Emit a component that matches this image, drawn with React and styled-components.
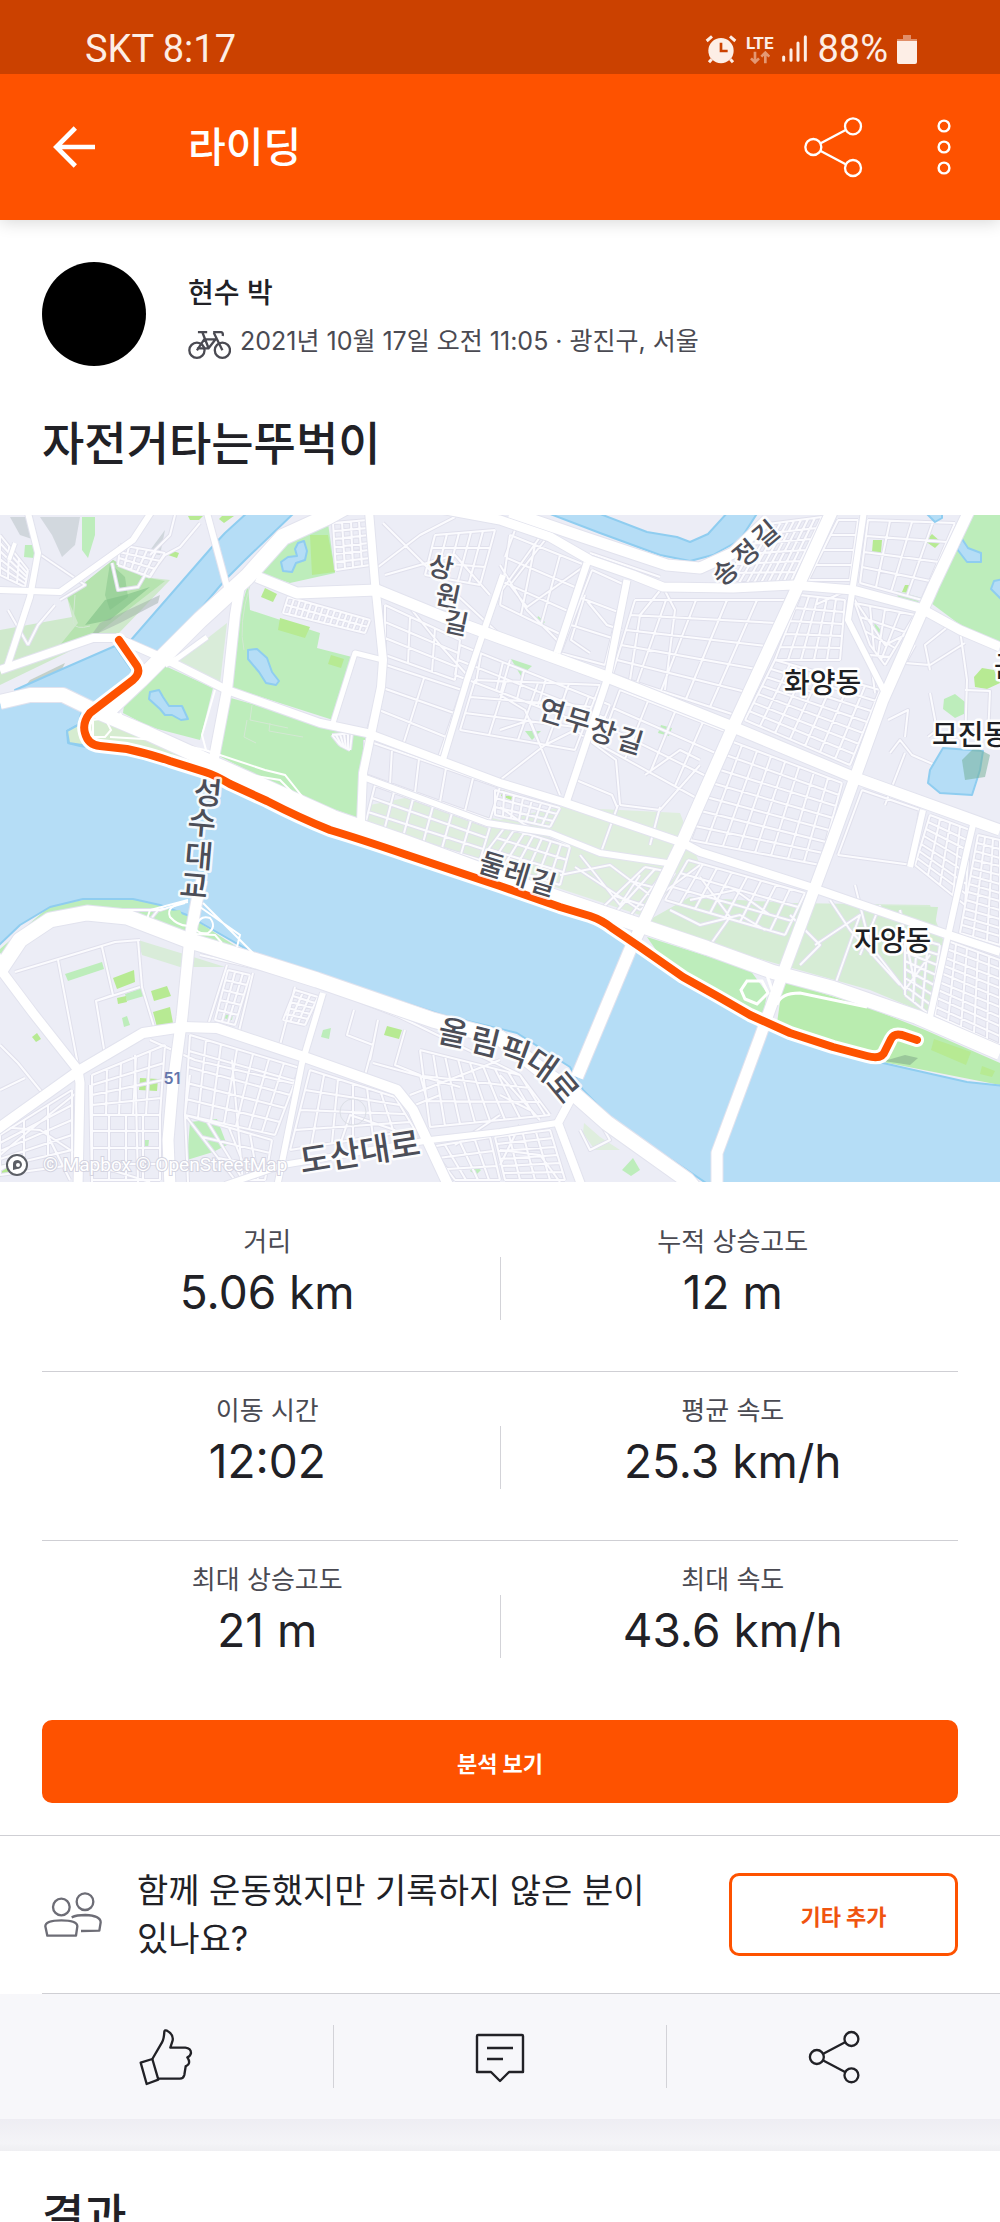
import styled, { createGlobalStyle } from 'styled-components';

const GlobalStyle = createGlobalStyle`
  * {
    box-sizing: border-box;
  }

  body {
    margin: 0;
    background: #ffffff;
    color: #212126;
    font-family: Inter, 'Noto Sans CJK KR', sans-serif;
  }

  button {
    font-family: inherit;
    cursor: pointer;
  }
`;

// Screen: fixed header on top, scrolling content below
const Screen = styled.div`
  display: flex;
  flex-direction: column;
  height: 100vh;
`;

const Header = styled.header`
  z-index: 1;
  background: #fe5200;
  color: #ffffff;
  box-shadow: 0 2px 16px rgba(0, 0, 0, 0.16);
`;

const StatusBar = styled.div`
  display: flex;
  align-items: center;
  justify-content: space-between;
  height: 74px;
  padding: 24px 83px 0 85px;
  background: #cb4100;
  color: #fdeee6;
  font-family: Roboto, sans-serif;
  font-size: 38px;
  line-height: 44px;
`;

const StatusIcons = styled.div`
  display: flex;
  align-items: center;
  gap: 9px;
`;

const Network = styled.div`
  display: flex;
  flex-direction: column;
  align-items: center;
  font-size: 17px;
  font-weight: 700;
  line-height: 16px;
`;

const AppBar = styled.div`
  display: flex;
  align-items: center;
  height: 146px;
  padding: 0 32px 0 42px;
`;

const IconButton = styled.button`
  display: flex;
  align-items: center;
  justify-content: center;
  width: ${props => props.$width || 64}px;
  height: 64px;
  padding: 0;
  border: 0;
  background: none;
  color: inherit;
`;

const ScreenTitle = styled.h1`
  flex: 1;
  margin: 0 0 0 82px;
  font-size: 41px;
  font-weight: 500;
  line-height: 60px;
`;

const BarActions = styled.div`
  display: flex;
  gap: 55px;
`;

const Content = styled.main`
  flex: 1;
  min-height: 0;
  overflow-y: auto;
  scrollbar-width: none;
`;

const Summary = styled.section`
  padding: 42px 42px 40px;
`;

const Athlete = styled.div`
  display: flex;
  gap: 42px;
`;

const Avatar = styled.div`
  width: 104px;
  height: 104px;
  border-radius: 50%;
  background: #000000;
`;

const AthleteText = styled.div`
  display: flex;
  flex-direction: column;
  gap: 8px;
  padding-top: 11px;
`;

const AthleteName = styled.div`
  font-size: 28px;
  font-weight: 500;
  line-height: 40px;
`;

const Meta = styled.div`
  display: flex;
  align-items: flex-end;
  gap: 9px;
  color: #4a4a52;
  font-size: 25px;
  line-height: 40px;
`;

const Heading = styled.h2`
  margin: ${props => props.$top || 0}px 0 0;
  font-size: 46px;
  font-weight: 500;
  line-height: 64px;
`;

const MapFrame = styled.svg`
  display: block;
  width: 100%;
  height: auto;
  font-family: 'Noto Sans CJK KR', sans-serif;
`;

const Stats = styled.section`
  padding: 21px 42px 32px;
`;

const StatRow = styled.div`
  display: grid;
  grid-template-columns: 1fr 1px 1fr;
  gap: 7px;
  padding: 21px 0 51px;
  border-bottom: ${props => (props.$last ? '0' : '1px solid #cfcfd4')};
`;

const Stat = styled.div`
  display: flex;
  flex-direction: column;
  align-items: center;
  gap: 4px;
`;

const StatLabel = styled.div`
  color: #4a4a52;
  font-size: 26px;
  line-height: 36px;
`;

const StatValue = styled.div`
  font-size: 46px;
  line-height: 56px;
`;

const Separator = styled.div`
  width: 1px;
  height: 63px;
  align-self: ${props => props.$align || 'end'};
  background: #d3d3d8;
`;

const Button = styled.button`
  width: ${props => props.$width || '100%'};
  height: 83px;
  border: 3px solid #fe5200;
  border-radius: 10px;
  background: ${props => (props.$outline ? '#ffffff' : '#fe5200')};
  color: ${props => (props.$outline ? '#f0540f' : '#ffffff')};
  font-size: 22px;
  font-weight: 700;
`;

const AnalysisButton = styled(Button)`
  display: block;
  margin-top: 11px;
`;

const Prompt = styled.section`
  display: flex;
  align-items: center;
  height: 158px;
  padding: 0 42px;
  border-top: 1px solid #cfcfd4;
`;

const PromptText = styled.p`
  flex: 1;
  margin: 0 20px 0 35px;
  font-size: 34px;
  line-height: 48px;
  word-break: keep-all;
`;

const Divider = styled.div`
  height: 1px;
  margin-left: 42px;
  background: #cfcfd4;
`;

const Actions = styled.div`
  display: grid;
  grid-template-columns: 1fr 1px 1fr 1px 1fr;
  align-items: center;
  justify-items: center;
  height: 125px;
  background: #f7f7fa;
`;

const SectionGap = styled.div`
  height: 32px;
  background: linear-gradient(#eeedf3, #f4f4f7 75%, #efeff2);
`;

const Results = styled.section`
  padding: 32px 42px 40px;
`;

const land = '#ecedf6';
const water = '#b5ddf6';
const shore = '#8fcdf0';
const green = '#bdedbb';
const lime = '#b7ea93';

// Major roads: [width, points]
const roads = [
  [14, '0,187 30,180 63,180 100,198 147,218 213,248 273,275 333,302 400,325 550,380 633,408 707,433 773,457 833,473 917,502 1000,538'],
  [15, '0,455 20,425 50,405 87,398 127,402 187,425 260,447 317,465 433,505 500,523 550,562 573,578 607,608 687,665 700,680'],
  [16, '345,-8 327,2 283,22 247,62 200,105 140,165 105,198'],
  [11, '510,-3 583,22 667,50 700,53 733,38 767,5'],
  [9, '440,-6 500,5 550,22 590,45 633,60 663,72 733,73 793,70 853,75 920,93 960,115 1000,132'],
  [11, '257,62 297,78 377,75 443,102 500,123 607,162 733,212 853,262 1000,315'],
  [8, '0,155 93,123 117,123 167,145 227,175 320,208 367,218 500,268 563,287 683,328 700,337 810,372 943,418 1000,437'],
  [6, '363,262 487,308 550,318 600,338 667,348'],
  [8, '369,-4 375,68 383,145 381,172 363,258 361,307'],
  [6, '503,60 467,165 442,248'],
  [7, '587,48 557,138'],
  [7, '627,65 607,165 567,285'],
  [12, '832,-4 793,82 733,212 680,332 630,435 577,562'],
  [6, '864,-4 848,105 885,178'],
  [11, '969,-4 933,72 883,185 830,332 783,458 760,522 717,638 717,672'],
  [6, '923,295 910,352'],
  [6, '973,310 967,335 930,502'],
  [6, '207,-2 227,72'],
  [10, '240,70 235,100 227,175 213,248'],
  [6, '28,-2 38,38 30,82 7,152'],
  [6, '-2,75 60,77 133,25 152,-4'],
  [5, '333,208 355,138 383,145'],
  [11, '202,365 197,385 190,422 182,502 173,568 168,625 170,672'],
  [9, '-4,440 3,458 33,498 78,555 80,568 78,672'],
  [10, '-4,615 80,555 143,518 183,512 217,513 307,543 397,575 413,595 449,672'],
  [6, '323,478 302,548 277,672'],
  [6, '225,670 283,650 430,625 500,617 557,608'],
  [8, '572,582 558,608 582,672'],
  [4, '15,28 9,45'],
  [5, '207,122 178,143 165,150'],
];

// Side streets drawn one by one
const lanes = [
  '383,8 430,55 500,120', '378,52 420,20 455,2', '400,80 440,130 467,160', '385,60 455,40 490,80',
  '515,15 505,42', '502,75 540,22', '500,50 527,95 560,128', '545,25 510,70 527,92 586,50', '585,80 571,125 590,138',
  '587,86 607,110 622,115', '663,72 640,100 630,165', '663,72 675,95 665,175', '590,38 660,62', '815,90 848,75 885,130 905,120',
  '875,178 870,140 890,142', '905,148 930,150 965,128', '960,115 967,165 965,230', '965,175 990,176 988,222',
  '890,238 900,225 912,240 935,250', '905,238 885,290', '888,205 908,195 905,222', '930,178 937,215 928,222',
  '930,155 925,130 950,110', '915,130 905,148', '500,215 530,205 560,280', '500,265 545,230 575,215 616,245 620,290',
  '576,265 612,280 617,292', '500,180 525,195 540,230', '510,145 500,180', '500,292 525,310 570,330', '620,290 660,295 700,250',
  '618,290 600,340', '645,260 680,235 700,245', '660,292 650,330', '580,340 620,390 640,360', '575,352 640,395', '640,395 700,350',
  '560,360 610,350 650,380', '670,395 700,410 740,400 765,415', '700,362 730,402 710,430', '690,385 735,375 770,400', '790,400 820,430 800,450',
  '830,385 850,415 900,470', '815,430 860,400 835,470', '855,370 870,430 905,475 930,440', '880,390 860,440', '900,395 915,470',
  '55,90 38,110 28,130', '8,95 28,130', '38,38 85,70 60,85', '150,40 170,20 175,0', '150,60 165,40 180,32 200,8', '112,48 118,75 138,72 145,60',
  '15,457 115,427 140,425', '58,445 78,550', '102,432 113,480', '138,425 142,472 155,515', '113,480 96,486 105,540', '96,486 140,472',
  '0,530 18,548 40,575 50,583', '0,575 25,563', '227,450 208,510', '253,458 238,520', '295,472 280,530', '354,495 347,520 373,530 365,560',
  '378,505 370,545', '405,515 395,550 420,560 427,585', '373,548 460,572', '200,440 300,463 400,502 520,560', '410,580 500,545',
  '0,612 40,615 78,640', '0,640 30,615 80,575', '45,615 70,665', '95,650 150,667', '0,655 25,640', '90,570 92,667', '135,540 138,667',
  '150,525 195,545 300,570', '190,560 185,600 188,667', '232,545 243,667', '340,630 350,600 395,615', '415,590 440,580', '455,630 500,600',
  '520,560 545,600', '500,560 540,605', '500,580 530,595', '500,635 540,640 560,667', '520,610 500,650', '590,590 610,625 590,635 580,615',
  '160,395 175,385 190,385', '150,405 158,395', '200,385 255,440', '202,388 240,430', '120,395 160,395 187,385',
];

// Blocks with a regular street grid: corners clockwise, columns, rows
const grids = [
  [[[288, 82], [370, 105], [365, 118], [283, 98]], 14, 2],
  [[[333, 8], [368, 5], [370, 50], [336, 55]], 4, 6],
  [[[385, 90], [460, 125], [455, 165], [385, 140]], 3, 3],
  [[[386, 150], [462, 175], [438, 245], [368, 215]], 2, 3],
  [[[365, 225], [500, 272], [490, 305], [365, 260]], 5, 1],
  [[[435, 20], [495, 15], [480, 70], [425, 60]], 5, 3],
  [[[475, 165], [600, 170], [575, 235], [460, 215]], 4, 3],
  [[[460, 130], [610, 190], [600, 215], [455, 160]], 7, 2],
  [[[510, 20], [585, 50], [562, 120], [500, 90]], 3, 3],
  [[[592, 55], [625, 70], [605, 150], [560, 138]], 1, 3],
  [[[635, 85], [788, 85], [735, 200], [612, 160]], 5, 5],
  [[[620, 175], [730, 218], [700, 285], [600, 230]], 4, 3],
  [[[760, 10], [822, 2], [790, 68], [725, 68]], 9, 6],
  [[[800, 80], [845, 85], [840, 145], [775, 145]], 5, 5],
  [[[775, 145], [880, 175], [850, 250], [745, 205]], 7, 7],
  [[[838, 5], [858, 5], [850, 65], [808, 65]], 1, 4],
  [[[868, 5], [955, 8], [922, 85], [860, 68]], 4, 4],
  [[[855, 88], [915, 100], [885, 150], [870, 130]], 4, 3],
  [[[728, 225], [842, 268], [820, 350], [690, 325]], 8, 7],
  [[[862, 275], [920, 295], [912, 350], [838, 340]], 1, 1],
  [[[930, 300], [970, 315], [965, 390], [915, 350]], 4, 7],
  [[[978, 320], [1000, 325], [1000, 430], [960, 418]], 3, 12],
  [[[945, 425], [1000, 445], [1000, 530], [935, 500]], 5, 9],
  [[[905, 420], [940, 430], [930, 500], [905, 480]], 3, 7],
  [[[688, 345], [805, 378], [785, 420], [665, 385]], 8, 3],
  [[[495, 275], [560, 293], [550, 312], [495, 300]], 7, 3],
  [[[375, 270], [490, 312], [480, 345], [365, 310]], 6, 3],
  [[[505, 312], [570, 332], [560, 370], [480, 345]], 7, 3],
  [[[645, 352], [675, 358], [640, 410], [600, 395]], 3, 3],
  [[[190, 520], [300, 553], [275, 620], [185, 600]], 7, 5],
  [[[185, 600], [272, 625], [265, 665], [235, 665]], 4, 3],
  [[[310, 555], [395, 582], [415, 615], [290, 635]], 6, 4],
  [[[420, 535], [520, 560], [550, 600], [430, 612]], 8, 3],
  [[[295, 475], [318, 482], [305, 510], [283, 505]], 3, 5],
  [[[228, 455], [250, 460], [235, 510], [215, 505]], 3, 5],
  [[[92, 560], [165, 530], [160, 600], [92, 600]], 5, 4],
  [[[92, 600], [160, 600], [160, 665], [92, 665]], 4, 4],
  [[[430, 632], [490, 622], [500, 665], [455, 665]], 4, 3],
  [[[495, 622], [550, 615], [565, 665], [505, 665]], 4, 6],
  [[[0, 620], [72, 575], [72, 650], [0, 660]], 3, 5],
  [[[120, 30], [165, 38], [150, 62], [118, 50]], 5, 3],
  [[[0, 20], [28, 55], [25, 72], [0, 60]], 3, 5],
  [[[332, 220], [352, 218], [350, 235], [340, 230]], 5, 1],
];

const parks = [
  ['163,150 213,173 200,225 150,212 123,198 125,182', green],
  ['248,70 240,95 230,172 333,205 352,142 317,133 320,118 250,95', green],
  ['227,182 370,222 358,303 300,282 217,240', green],
  ['328,8 335,58 290,68 258,58 287,25', green],
  ['310,20 328,20 335,57 312,60', lime],
  ['280,103 310,112 305,123 278,115', lime],
  ['265,73 277,79 273,87 261,82', lime],
  ['331,140 344,144 341,153 328,149', lime],
  ['227,108 177,147 220,168', '#d9ecd9'],
  ['113,45 67,82 72,102 0,115 0,170 93,125 117,120 170,65 143,62', '#cfe9cc'],
  ['113,45 67,82 78,108 60,130 93,122 165,66 143,62', '#b6e3af'],
  ['82,2 95,2 95,20 88,43 82,35', green],
  ['25,30 35,30 34,43 24,42', green],
  ['170,35 179,38 177,43 168,40', lime],
  ['188,1 203,1 199,5 190,5', lime],
  ['222,1 234,1 224,8 219,4', lime],
  ['967,0 1000,0 1000,128 967,115 927,85', green],
  ['897,76 922,83 915,90 898,85', green],
  ['905,70 911,70 909,78 902,77', lime],
  ['873,25 882,25 881,38 872,37', lime],
  ['932,19 941,27 935,33 925,26', lime],
  ['974,162 982,153 994,155 1000,168 987,174 975,172', lime],
  ['944,184 955,179 965,187 966,198 955,203 943,194', green],
  ['511,144 532,151 521,161', green],
  ['661,210 672,213 669,221 658,218', green],
  ['525,216 541,216 532,225', green],
  ['503,275 515,280 511,285 501,281', lime],
  ['538,101 545,107 541,111 536,106', green],
  ['874,107 883,118 876,120', green],
  ['370,290 410,282 500,305 560,292 680,298 700,350 640,400 361,308', '#dfeede'],
  ['690,382 790,388 930,390 945,430 930,500 870,475 640,410', '#d6ecd5'],
  ['850,390 938,392 935,410 850,385', '#d0ecce'],
  ['647,422 750,455 767,478 763,502 707,475 665,448', green],
  ['783,466 867,492 925,515 1000,548 1000,570 883,547 777,508', '#b9ecaf'],
  ['934,524 971,537 966,550 931,535', lime],
  ['982,551 995,556 992,562 980,559', lime],
  ['0,434 50,391 83,385 137,385 180,395 240,434 187,424 127,400 60,400 0,448', green],
  ['138,425 187,440 225,452 180,452 142,440', '#d9ecd9'],
  ['65,459 102,447 104,454 68,466', green],
  ['113,463 134,455 135,467 117,474', lime],
  ['125,479 142,473 144,481 127,486', green],
  ['117,483 126,481 127,487 118,489', lime],
  ['151,476 167,471 171,481 154,486', lime],
  ['153,497 170,492 173,508 157,512', lime],
  ['122,503 127,501 130,510 124,512', green],
  ['32,522 37,518 41,524 36,527', lime],
  ['224,498 233,498 232,505 223,503', green],
  ['323,515 331,513 329,524 321,522', green],
  ['387,511 402,515 399,524 384,520', lime],
  ['140,563 158,564 157,576 139,575', lime],
  ['190,607 217,604 227,630 213,637 187,645', green],
  ['142,625 149,625 148,634 141,633', green],
  ['0,650 10,648 8,658 0,662', lime],
  ['633,643 640,655 631,661 622,655', green],
  ['474,651 481,655 476,660 470,656', green],
  ['584,608 600,622 620,635 595,635 583,618', '#dfeede'],
];

const hillShades = [
  ['85,110 105,85 125,80 150,72 110,105', '#7fbf86', 0.6],
  ['110,48 125,62 128,82 110,95 105,80', '#7fbf86', 0.45],
  ['100,108 160,80 158,88 120,108 90,122', '#9aa8a4', 0.45],
  ['10,2 28,2 35,25 20,20', '#b3bfc2', 0.5],
  ['40,2 80,2 75,30 62,42 52,20', '#b3bfc2', 0.45],
  ['148,38 165,15 160,40', '#b3bfc2', 0.5],
  ['30,165 65,148 60,158 20,178', '#9db39c', 0.5],
];

const route =
  'M119 125L137 151Q141 158 133 165L90 198Q82 208 85 218Q88 230 100 231L127 234Q150 239 170 246L205 257Q215 260 230 269L267 286Q300 303 330 315Q360 324 407 340L500 371L560 392L590 401Q602 405 612 413L640 432L683 462L717 481L750 500L790 518L833 532L867 541Q882 545 885 536L891 524Q894 518 902 520L917 525';

// Labels that follow a street: [text, x, y, angle, size]
const streetLabels = [
  ['상', 441, 52, 12, 27],
  ['원', 448, 81, 12, 27],
  ['길', 456, 108, 12, 27],
  ['성', 208, 278, 5, 31],
  ['수', 202, 308, 5, 31],
  ['대', 199, 341, 5, 31],
  ['교', 194, 371, 5, 31],
  ['송', 725, 57, -40, 27],
  ['정', 746, 38, -40, 27],
  ['길', 766, 19, -40, 27],
  ['연', 552, 197, 17, 28],
  ['무', 578, 206, 17, 28],
  ['장', 603, 217, 17, 28],
  ['길', 630, 226, 17, 28],
  ['둘', 492, 350, 17, 28],
  ['레', 517, 359, 17, 28],
  ['길', 543, 368, 17, 28],
  ['올', 453, 518, 12, 32],
  ['림', 485, 527, 14, 32],
  ['픽', 515, 537, 20, 32],
  ['대', 542, 550, 35, 32],
  ['로', 563, 572, 50, 32],
  ['도산대로', 360, 637, -9, 33],
];

const placeLabels = [
  ['화양동', 784, 168],
  ['모진동', 932, 220],
  ['자양동', 854, 426],
  ['군자동', 994, 152],
];

const stats = [
  [['거리', '5.06 km'], ['누적 상승고도', '12 m']],
  [['이동 시간', '12:02'], ['평균 속도', '25.3 km/h']],
  [['최대 상승고도', '21 m'], ['최대 속도', '43.6 km/h']],
];

const mix = (p, q, t) => [
  Math.round(p[0] + (q[0] - p[0]) * t),
  Math.round(p[1] + (q[1] - p[1]) * t),
];

function gridPath([corners, cols, rows]) {
  const [a, b, c, d] = corners;
  let path = '';
  for (let i = 0; i <= cols; i++) {
    path += `M${mix(a, b, i / cols)}L${mix(d, c, i / cols)}`;
  }
  for (let i = 0; i <= rows; i++) {
    path += `M${mix(a, d, i / rows)}L${mix(b, c, i / rows)}`;
  }
  return path;
}

function RouteMap() {
  const streets = grids.map(gridPath).join('') + lanes.map(points => `M${points}`).join('');

  return (
    <MapFrame viewBox="0 0 1000 667" role="img" aria-label="라이딩 경로 지도">
      <rect width="1000" height="667" fill={land} />
      {parks.map(([points, fill]) => (
        <polygon key={points} points={points} fill={fill} />
      ))}
      {hillShades.map(([points, fill, opacity]) => (
        <polygon key={points} points={points} fill={fill} opacity={opacity} />
      ))}

      <g fill="none" strokeLinejoin="round">
        <path d={streets} stroke="#e0e0ec" strokeWidth="4" />
        <path d={streets} stroke="#fbfbfe" strokeWidth="2" />
      </g>
      <g fill="none" stroke="#d3e8d3" strokeWidth="1">
        <path d="M250 70Q238 110 244 135M252 190L250 205L288 213M247 205L244 222L256 228M270 208L269 216L303 222M75 80L73 108Q76 115 90 111" />
      </g>

      {/* Han river and the streams that join it */}
      <g fill={water} stroke={shore} strokeWidth="2" strokeLinejoin="round">
        <path d="M-5 190L30 184L60 184L82 195L78 210L67 216L68 228L80 231L100 234L157 246L210 263L267 290L333 316L407 340L500 374L600 410L683 466L750 504L833 536L883 548L927 558L967 567L1005 571V672H712L613 605L583 575L570 552L517 518L443 500L320 460L260 442L187 400L160 390L133 384L83 384L50 392L20 410L-5 434Z" />
        <path d="M248 -3L225 18L212 32L131 125L160 142L225 65L245 45L295 -3Z" />
        <path d="M115 131L60 155L15 175L45 176L95 188L135 160Z" />
        <path d="M545 -3L600 18L660 40L690 46L713 40L740 25L758 -3H728L708 19L690 27L677 22L647 17L595 -3Z" />
        <path d="M943 233L983 236L980 255L972 280L940 278L928 268L930 255Z" />
        <path d="M304 26L307 36L305 45L296 48L292 57L283 56L281 47L288 42L297 41L295 34L298 28Z" />
        <path d="M248 135L257 134L267 143L272 157L279 166L276 170L266 168L259 157L248 144Z" />
        <path d="M150 177L159 175L163 182L169 191L182 191L188 204L181 205L172 200L165 200L160 194L149 184Z" />
        <path d="M962 24L968 33L981 38L981 47L967 47L957 34Z" />
        <path d="M925 -3L935 7L942 3L942 -3Z" />
        <path d="M1003 64L994 66L991 74L1003 86Z" />
      </g>
      <polygon points="78,210 67,216 69,228 82,230 95,230 110,222 95,208" fill="#d6ecd0" stroke={shore} strokeWidth="2" />
      <polygon points="86,228 84,208 92,202 150,225 205,250 200,254" fill="#d6ecd0" />
      <polygon points="160,397 180,395 184,405 210,425 240,434 187,424 150,410" fill={green} />
      <polygon points="962,245 975,232 990,240 985,262 965,265" fill="#6fae92" opacity="0.5" />
      <polygon points="884,546 905,540 918,543 910,550" fill="#9ac79a" />

      <g fill="none" strokeLinejoin="round">
        {roads.map(([width, points]) => (
          <polyline key={points} points={points} stroke="#e2e3ee" strokeWidth={width + 2} />
        ))}
        {roads.map(([width, points]) => (
          <polyline key={points} points={points} stroke="#ffffff" strokeWidth={width} />
        ))}
      </g>

      {/* Interchange ramps */}
      <g fill="none" stroke="#ffffff" strokeWidth="2">
        <path d="M203 388L255 440M200 392L240 420L237 432M188 385L150 395L147 404M188 387Q165 390 170 402Q180 413 192 410" />
        <path d="M120 395L160 395L185 388M197 410Q200 400 210 403Q217 412 208 418Q195 420 194 408M195 419L215 420L222 428" />
        <path d="M93 205L105 203L111 215L105 222L93 222ZM110 222L160 225L205 235L265 255L285 260L305 285M120 198L128 212L205 245L250 260L280 265L298 283" />
        <path d="M215 175L202 220L206 235M123 182L160 140" />
        <path d="M747 466L762 466L768 478L757 489L745 484L741 475Z" strokeWidth="3" />
        <path d="M767 460L773 478L770 500M777 490Q780 478 800 478L867 492" strokeWidth="3" />
      </g>
      <circle cx="353" cy="597" r="13" fill="none" stroke="#dcdfe6" />

      <g fill="none" strokeLinecap="round" strokeLinejoin="round">
        <path d={route} stroke="#ffffff" strokeWidth="14" />
        <path d={route} stroke="#fe5200" strokeWidth="8" />
      </g>

      <g
        stroke="#ffffff"
        strokeWidth="5"
        strokeLinejoin="round"
        paintOrder="stroke"
        textAnchor="middle"
        fill="#4c4e58"
        fontWeight="500"
      >
        {streetLabels.map(([text, x, y, angle, size]) => (
          <text
            key={`${text}${x}`}
            x={x}
            y={y}
            dy="0.36em"
            fontSize={size}
            strokeOpacity="0.85"
            transform={`rotate(${angle} ${x} ${y})`}
          >
            {text}
          </text>
        ))}
      </g>
      <g stroke="#ffffff" strokeWidth="5" strokeLinejoin="round" paintOrder="stroke" fill="#1e1f24" fontSize="28" fontWeight="500">
        {placeLabels.map(([text, x, y]) => (
          <text key={text} x={x} y={y} dy="0.36em">
            {text}
          </text>
        ))}
      </g>
      <text x="172" y="569" textAnchor="middle" fontFamily="Inter, sans-serif" fontSize="16" fontWeight="600" fill="#6375ab">
        51
      </text>

      <circle cx="17" cy="650" r="10" fill="#ffffff" stroke="#5c5f66" strokeWidth="2" />
      <path d="M13 655V649Q13 645 18 645Q22 646 22 650Q21 654 17 654Z" fill="#5c5f66" />
      <circle cx="18" cy="650" r="2" fill="#ffffff" />
      <text x="43" y="656" fontFamily="Roboto, sans-serif" fontSize="19" fill="#ffffff" stroke="#d3d3e0" strokeWidth="2" paintOrder="stroke">
        © Mapbox © OpenStreetMap
      </text>
    </MapFrame>
  );
}

function AlarmIcon() {
  return (
    <svg width="32" height="30" viewBox="608 96 96 90" fill="none" stroke="currentColor">
      <circle cx="656" cy="146" r="38" fill="currentColor" stroke="none" />
      <path d="M613 117L629 103M699 117L683 103M628 172L620 181M684 172L692 181" strokeWidth="9" />
      <path d="M656 122V147H676" stroke="#cb4100" strokeWidth="8" />
    </svg>
  );
}

function DataArrowsIcon() {
  return (
    <svg width="20" height="13" viewBox="752 150 60 39" fill="none" stroke="currentColor" strokeWidth="8" opacity="0.5">
      <path d="M767 152V184M755 172L767 184L779 172M798 187V155M786 167L798 155L810 167" />
    </svg>
  );
}

function SignalIcon() {
  return (
    <svg width="26" height="28" viewBox="854 104 78 84" stroke="currentColor" strokeWidth="9" strokeLinecap="round">
      <path d="M859 170V180M881 148V180M902 128V180M924 109V180" />
    </svg>
  );
}

function BatteryIcon() {
  return (
    <svg width="20" height="30" viewBox="0 0 20 30" fill="currentColor">
      <path d="M6 1H14V5H20V8H0V5H6Z" opacity="0.45" />
      <path d="M0 7H20V28Q20 30 18 30H2Q0 30 0 28Z" />
    </svg>
  );
}

function BackIcon() {
  return (
    <svg width="44" height="44" viewBox="155 375 132 132" fill="none" stroke="currentColor" strokeWidth="14">
      <path d="M284 441H168M225 384L168 441L225 498" />
    </svg>
  );
}

function ShareIcon({ size = 62, stroke = 7 }) {
  return (
    <svg width={size} height={size} viewBox="905 345 186 186" fill="none" stroke="currentColor" strokeWidth={stroke}>
      <circle cx="1058" cy="376" r="24" />
      <circle cx="939" cy="438" r="24" />
      <circle cx="1058" cy="501" r="24" />
      <path d="M961 427L1036 387M961 450L1036 490" />
    </svg>
  );
}

function MoreIcon() {
  return (
    <svg width="16" height="58" viewBox="0 0 16 58" fill="none" stroke="currentColor" strokeWidth="2.4">
      <circle cx="8" cy="8" r="5.4" />
      <circle cx="8" cy="29" r="5.4" />
      <circle cx="8" cy="50" r="5.4" />
    </svg>
  );
}

function BikeIcon() {
  return (
    <svg width="43" height="32" viewBox="22 21 130 96" fill="none" stroke="currentColor" strokeWidth="7">
      <circle cx="49" cy="85" r="23" />
      <circle cx="126" cy="85" r="23" />
      <path d="M52 30H80M98 30H122Q129 31 127 42M66 32L84 78M49 85L71 52H105L84 79H49M100 32L126 85" />
    </svg>
  );
}

function PeopleIcon() {
  return (
    <svg width="60" height="48" viewBox="126 586 180 144" fill="none" stroke="#6d6d76" strokeWidth="7" strokeLinejoin="round">
      <circle cx="184" cy="634" r="25" />
      <circle cx="255" cy="618" r="25" />
      <path d="M142 720L136 692Q136 674 184 674Q232 674 232 692L228 720Z" />
      <path d="M215 665Q230 658 256 658Q302 660 302 680L298 705L243 706" />
    </svg>
  );
}

function ThumbIcon() {
  return (
    <svg width="58" height="60" viewBox="411 990 174 180" fill="none" stroke="currentColor" strokeWidth="7" strokeLinejoin="round">
      <path d="M422 1097L457 1086L475 1148L440 1161Z" />
      <path d="M457 1086L486 1036Q492 1026 493 1004Q494 998 501 1001Q521 1012 518 1030L511 1052H556Q573 1054 573 1068Q571 1078 562 1081Q571 1094 565 1102Q560 1106 557 1108L553 1134Q550 1145 540 1145H474" />
    </svg>
  );
}

function CommentIcon() {
  return (
    <svg width="50" height="54" viewBox="0 0 50 54" fill="none" stroke="currentColor" strokeWidth="2.4" strokeLinejoin="round">
      <path d="M3 5H47Q48 5 48 6V42H34L25 51L16 42H2V6Q2 5 3 5Z" />
      <path d="M12 18H38M12 29H28" />
    </svg>
  );
}

export default function App() {
  return (
    <Screen>
      <GlobalStyle />
      <Header>
        <StatusBar>
          <span>SKT 8:17</span>
          <StatusIcons>
            <AlarmIcon />
            <Network>
              LTE
              <DataArrowsIcon />
            </Network>
            <SignalIcon />
            <span>88%</span>
            <BatteryIcon />
          </StatusIcons>
        </StatusBar>
        <AppBar>
          <IconButton aria-label="뒤로">
            <BackIcon />
          </IconButton>
          <ScreenTitle>라이딩</ScreenTitle>
          <BarActions>
            <IconButton aria-label="공유">
              <ShareIcon />
            </IconButton>
            <IconButton $width={48} aria-label="더보기">
              <MoreIcon />
            </IconButton>
          </BarActions>
        </AppBar>
      </Header>

      <Content>
        <Summary>
          <Athlete>
            <Avatar />
            <AthleteText>
              <AthleteName>현수 박</AthleteName>
              <Meta>
                <BikeIcon />
                <span>2021년 10월 17일 오전 11:05 · 광진구, 서울</span>
              </Meta>
            </AthleteText>
          </Athlete>
          <Heading $top={45}>자전거타는뚜벅이</Heading>
        </Summary>

        <RouteMap />

        <Stats>
          {stats.map(([left, right], index) => (
            <StatRow key={left[0]} $last={index === stats.length - 1}>
              <Stat>
                <StatLabel>{left[0]}</StatLabel>
                <StatValue>{left[1]}</StatValue>
              </Stat>
              <Separator />
              <Stat>
                <StatLabel>{right[0]}</StatLabel>
                <StatValue>{right[1]}</StatValue>
              </Stat>
            </StatRow>
          ))}
          <AnalysisButton>분석 보기</AnalysisButton>
        </Stats>

        <Prompt>
          <PeopleIcon />
          <PromptText>함께 운동했지만 기록하지 않은 분이 있나요?</PromptText>
          <Button $outline $width="229px">기타 추가</Button>
        </Prompt>
        <Divider />

        <Actions>
          <IconButton aria-label="좋아요">
            <ThumbIcon />
          </IconButton>
          <Separator $align="center" />
          <IconButton aria-label="댓글">
            <CommentIcon />
          </IconButton>
          <Separator $align="center" />
          <IconButton aria-label="공유">
            <ShareIcon size={54} stroke={8} />
          </IconButton>
        </Actions>
        <SectionGap />

        <Results>
          <Heading>결과</Heading>
        </Results>
      </Content>
    </Screen>
  );
}
